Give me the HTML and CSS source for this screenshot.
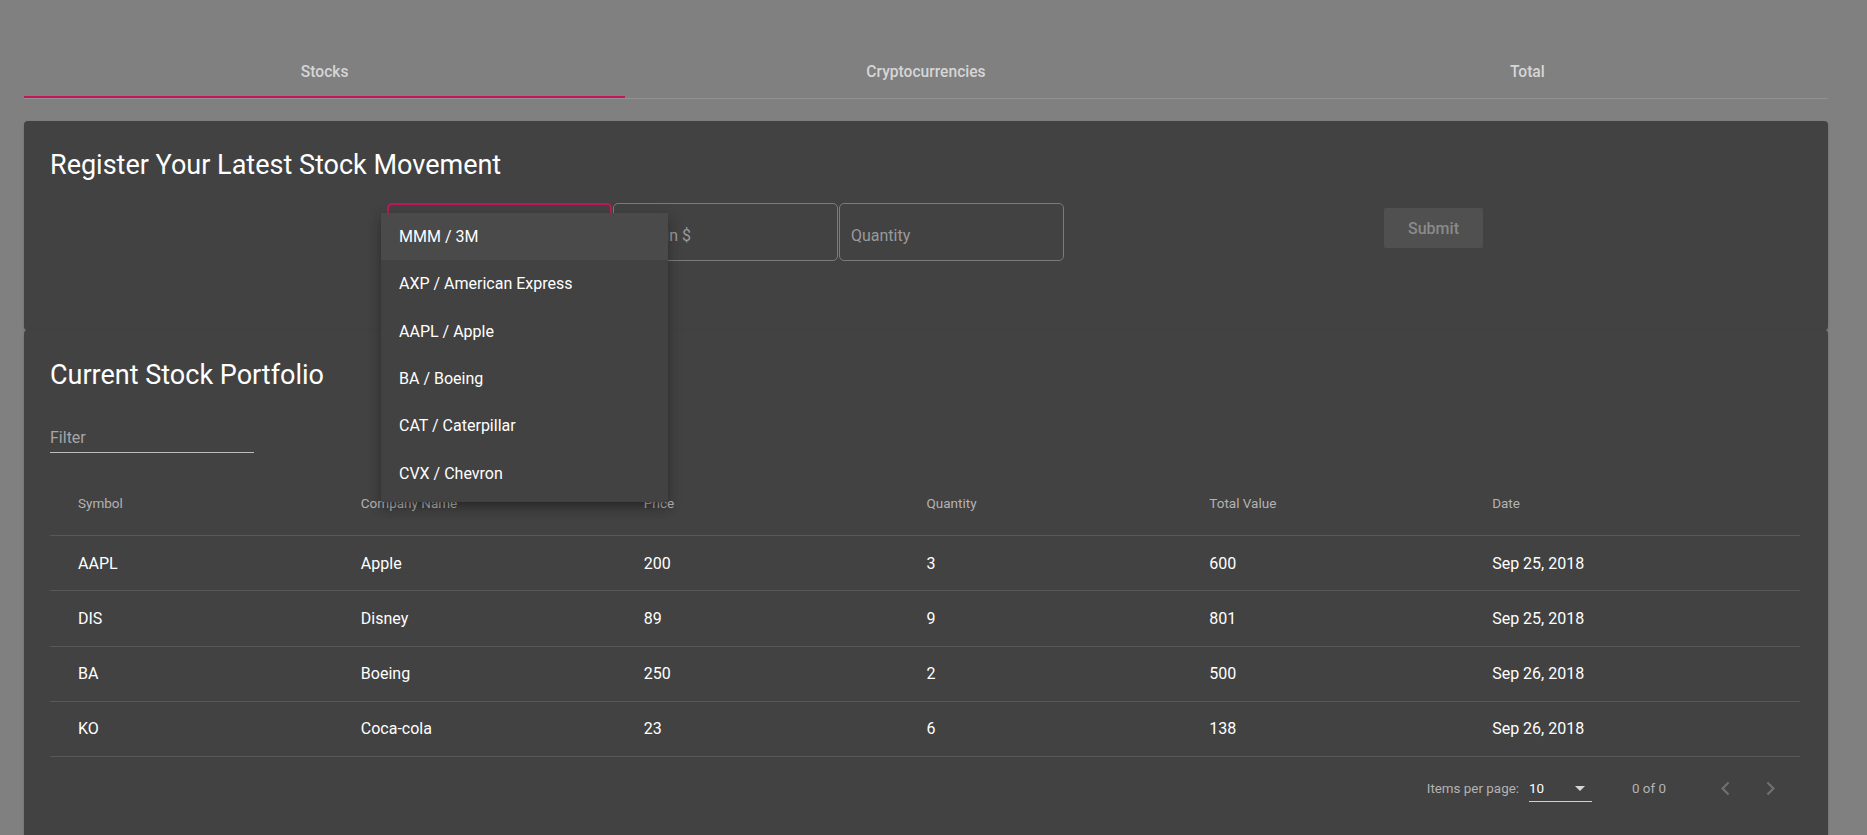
FILE: index.html
```html
<!DOCTYPE html>
<html lang="en">
<head>
<meta charset="utf-8">
<title>Portfolio</title>
<link rel="stylesheet" href="styles.css">
</head>
<body>
<div class="page">
  <nav class="tabs">
    <div class="tab active">Stocks</div>
    <div class="tab">Cryptocurrencies</div>
    <div class="tab">Total</div>
  </nav>

  <section class="card card-register">
    <h2 class="card-title">Register Your Latest Stock Movement</h2>
    <form class="form-row">
      <div class="field field-select focused">
        <div class="select-panel">
          <div class="option active">MMM / 3M</div>
          <div class="option">AXP / American Express</div>
          <div class="option">AAPL / Apple</div>
          <div class="option">BA / Boeing</div>
          <div class="option">CAT / Caterpillar</div>
          <div class="option">CVX / Chevron</div>
        </div>
      </div>
      <div class="field"><span class="placeholder">Price in $</span></div>
      <div class="field"><span class="placeholder">Quantity</span></div>
      <button type="button" class="submit" disabled>Submit</button>
    </form>
  </section>

  <section class="card card-portfolio">
    <h2 class="card-title">Current Stock Portfolio</h2>
    <div class="filter"><span class="filter-label">Filter</span></div>

    <div class="table">
      <div class="row header-row">
        <div>Symbol</div><div>Company Name</div><div>Price</div><div>Quantity</div><div>Total Value</div><div>Date</div>
      </div>
      <div class="row">
        <div>AAPL</div><div>Apple</div><div>200</div><div>3</div><div>600</div><div>Sep 25, 2018</div>
      </div>
      <div class="row">
        <div>DIS</div><div>Disney</div><div>89</div><div>9</div><div>801</div><div>Sep 25, 2018</div>
      </div>
      <div class="row">
        <div>BA</div><div>Boeing</div><div>250</div><div>2</div><div>500</div><div>Sep 26, 2018</div>
      </div>
      <div class="row">
        <div>KO</div><div>Coca-cola</div><div>23</div><div>6</div><div>138</div><div>Sep 26, 2018</div>
      </div>
    </div>

    <div class="paginator">
      <span class="pg-label">Items per page:</span>
      <div class="pg-select">
        <span class="pg-value">10</span>
        <span class="pg-arrow"></span>
      </div>
      <span class="pg-range">0 of 0</span>
      <button type="button" class="pg-btn pg-prev" disabled aria-label="Previous page">
        <svg viewBox="0 0 24 24" width="27" height="27"><path d="M15.41 7.41L14 6l-6 6 6 6 1.41-1.41L10.83 12z"/></svg>
      </button>
      <button type="button" class="pg-btn pg-next" disabled aria-label="Next page">
        <svg viewBox="0 0 24 24" width="27" height="27"><path d="M8.59 16.59L10 18l6-6-6-6-1.41 1.41L13.17 12z"/></svg>
      </button>
    </div>
  </section>
</div>
</body>
</html>
```

FILE: styles.css
```css
html, body {
  margin: 0;
  padding: 0;
  height: 835px;
  overflow: hidden;
}

body {
  background: #808080;
  font-family: Roboto, "Noto Sans", "Liberation Sans", sans-serif;
  color: #ffffff;
}

.page {
  padding: 43px 39px 0 24px;
}

/* Tabs */
.tabs {
  display: grid;
  grid-template-columns: 1fr 1fr 1fr;
  height: 55px;
  border-bottom: 1px solid #919191;
}

.tab {
  display: flex;
  align-items: center;
  justify-content: center;
  padding-top: 2px;
  font-size: 15.6px;
  font-weight: 500;
  color: #d6d6d6;
}

.tab.active {
  box-shadow: inset 0 -2px 0 #c2185b;
}

/* Cards */
.card {
  background: #424242;
  border-radius: 4px;
  box-shadow: 0 2px 1px -1px rgba(0,0,0,.2), 0 1px 1px 0 rgba(0,0,0,.14), 0 1px 3px 0 rgba(0,0,0,.12);
  position: relative;
}

.card-register {
  margin-top: 22px;
  padding: 28px 28px 69px 26px;
}

.card-portfolio {
  padding: 29px 28px 30px 26px;
}

.card-title {
  margin: 0;
  font-size: 27px;
  line-height: 32px;
  font-weight: 400;
  color: #ffffff;
}

/* Form */
.form-row {
  display: flex;
  align-items: flex-start;
  gap: 1px;
  margin: 22px 0 0 0;
  padding-left: 337px;
}

.field {
  position: relative;
  box-sizing: border-box;
  width: 225px;
  height: 58px;
  border: 1px solid #7b7b7b;
  border-radius: 5px;
  padding: 22px 0 0 11px;
}

.field.focused {
  border: 2px solid #c2185b;
}

.placeholder {
  display: block;
  font-size: 16px;
  line-height: 20px;
  color: #9a9a9a;
}

.select-panel {
  position: absolute;
  top: 8px;
  left: -8px;
  width: 287px;
  padding-bottom: 5px;
  background: #424242;
  border-radius: 2px;
  box-shadow: 0 5px 5px -3px rgba(0,0,0,.2), 0 8px 10px 1px rgba(0,0,0,.14), 0 3px 14px 2px rgba(0,0,0,.12);
  z-index: 10;
}

.option {
  height: 47.3px;
  display: flex;
  align-items: center;
  padding-left: 18px;
  font-size: 16px;
  color: #ffffff;
}

.option.active {
  background: #4a4a4a;
}

.submit {
  margin: 5px 0 0 319px;
  width: 99px;
  height: 40px;
  border: none;
  border-radius: 2px;
  background: #505050;
  color: #8a8a8a;
  font-family: inherit;
  font-size: 16px;
  font-weight: 500;
  padding: 0;
}

/* Filter */
.filter {
  width: 204px;
  margin-top: 37px;
  padding-bottom: 4px;
  border-bottom: 1px solid #bdbdbd;
}

.filter-label {
  display: block;
  font-size: 16px;
  line-height: 20px;
  color: #a6a6a6;
}

/* Table */
.table {
  margin-top: 18px;
}

.row {
  display: grid;
  grid-template-columns: repeat(6, 1fr);
  align-items: center;
  box-sizing: border-box;
  height: 55.25px;
  padding: 0 25px 0 28px;
  border-bottom: 1px solid #585858;
  font-size: 16px;
  color: #ffffff;
}

.row.header-row {
  height: 65px;
  font-size: 13.5px;
  color: #b3b3b3;
}

/* Paginator */
.paginator {
  display: flex;
  align-items: center;
  justify-content: flex-end;
  height: 62px;
  padding-right: 7px;
  font-size: 13.4px;
  color: #b3b3b3;
}

.pg-label {
  margin-right: 10px;
}

.pg-select {
  position: relative;
  box-sizing: border-box;
  width: 63px;
  height: 26px;
  margin-top: 1px;
  border-bottom: 1px solid #d0d0d0;
  display: flex;
  align-items: center;
  justify-content: space-between;
  padding-right: 7px;
}

.pg-value {
  color: #ffffff;
}

.pg-arrow {
  width: 0;
  height: 0;
  border-left: 5px solid transparent;
  border-right: 5px solid transparent;
  border-top: 5px solid #d6d6d6;
}

.pg-range {
  margin-left: 40px;
  margin-right: 36px;
}

.pg-btn {
  width: 46px;
  height: 46px;
  padding: 0;
  border: none;
  background: transparent;
  display: flex;
  align-items: center;
  justify-content: center;
}

.pg-btn svg {
  fill: #6f6f6f;
}

.pg-next {
  margin-left: -1px;
}
```
